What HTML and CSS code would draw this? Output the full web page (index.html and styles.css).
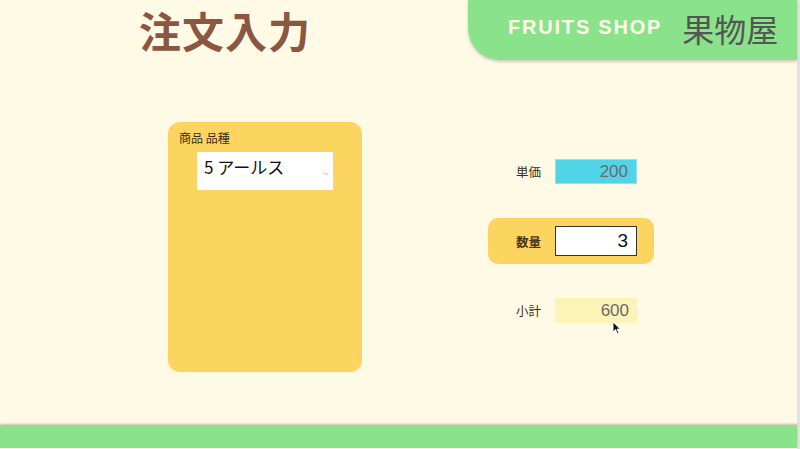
FILE: index.html
```html
<!DOCTYPE html>
<html lang="ja">
<head>
<meta charset="utf-8">
<title>注文入力</title>
<link rel="stylesheet" href="styles.css">
</head>
<body>
<div class="page">
  <header class="top">
    <h1 class="title">注文入力</h1>
    <div class="brand">
      <span class="brand-en">FRUITS SHOP</span>
      <span class="brand-ja">果物屋</span>
    </div>
  </header>
  <main class="content">
    <section class="card">
      <div class="card-label">商品 品種</div>
      <div class="select">
        <span class="select-text">5 アールス</span>
        <svg class="chev" width="6" height="4" viewBox="0 0 6 4"><path d="M0.5 0.5 L3 3 L5.5 0.5" fill="none" stroke="#bbb" stroke-width="0.8"/></svg>
      </div>
    </section>
    <section class="fields">
      <div class="row">
        <span class="label">単価</span>
        <div class="box box-blue">200</div>
      </div>
      <div class="row row-hl">
        <span class="label label-bold">数量</span>
        <div class="box box-input">3</div>
      </div>
      <div class="row">
        <span class="label">小計</span>
        <div class="box box-light">600</div>
      </div>
      <svg class="cursor" width="10" height="14" viewBox="0 0 10 14"><path d="M1 1 L1 11 L3.5 8.6 L5.3 12.6 L6.8 11.9 L5.1 8.1 L8.4 8.1 Z" fill="#111" stroke="#fff" stroke-width="0.9"/></svg>
    </section>
  </main>
  <footer class="footer"></footer>
</div>
</body>
</html>
```
FILE: styles.css
```css
* { box-sizing: border-box; }
html, body { margin: 0; padding: 0; }
body {
  width: 800px;
  height: 449px;
  background: #e4e2e6;
  overflow: hidden;
  font-family: "Noto Sans CJK JP", "Noto Sans", sans-serif;
}
.page {
  width: 797px;
  height: 449px;
  background: #fefae6;
  display: flex;
  flex-direction: column;
}
.top {
  display: flex;
  justify-content: space-between;
  height: 60px;
}
.title {
  margin: 0 0 0 139px;
  font-family: "Noto Sans CJK JP", sans-serif;
  font-weight: 700;
  font-size: 42px;
  line-height: 60px;
  color: #8b5741;
  letter-spacing: 1px;
}
.brand {
  width: 329px;
  height: 60px;
  background: #8ae28a;
  border-bottom-left-radius: 32px;
  box-shadow: 0 2px 3px rgba(0,0,0,0.18);
  display: flex;
  align-items: center;
  padding: 0 0 5px 40px;
}
.brand-en {
  font-family: "Liberation Sans", Arial, sans-serif;
  font-weight: 700;
  font-size: 20px;
  letter-spacing: 1.8px;
  color: #fffbe8;
}
.brand-ja {
  margin-left: 20px;
  font-family: "Noto Sans CJK JP", sans-serif;
  font-size: 32px;
  color: #555;
  line-height: 1;
}
.content {
  display: flex;
  padding-left: 168px;
  padding-top: 62px;
}
.card {
  width: 194px;
  height: 250px;
  background: #fbd55f;
  border-radius: 12px;
  padding: 8px 0 0 11px;
}
.card-label {
  font-size: 12px;
  line-height: 16px;
  color: #3b2a18;
}
.select {
  margin: 6px 0 0 18px;
  width: 136px;
  height: 38px;
  background: #fff;
  display: flex;
  align-items: center;
  justify-content: space-between;
  padding: 0 4px 0 7px;
}
.select-text {
  font-size: 17px;
  color: #111;
  line-height: 1;
  margin-top: -9px;
}
.chev { margin-top: 6px; }
.fields {
  position: relative;
  margin-left: 126px;
  width: 166px;
  padding-top: 37px;
  display: flex;
  flex-direction: column;
  gap: 34px;
}
.row {
  display: flex;
  align-items: center;
  padding-left: 28px;
  height: 25px;
}
.row-hl {
  height: 46px;
  background: #fbd55f;
  border-radius: 10px;
}
.label {
  width: 39px;
  font-size: 12.5px;
  color: #3b2a18;
}
.label-bold {
  font-weight: 700;
  font-size: 12.5px;
  color: #4a3514;
}
.box {
  width: 82px;
  height: 25px;
  font-family: "Liberation Sans", Arial, sans-serif;
  font-size: 17px;
  text-align: right;
  padding-right: 8px;
  line-height: 25px;
  color: #6a6a6a;
}
.box-blue {
  background: #52d4e8;
  border: 1px solid #8fe2ee;
  line-height: 23px;
}
.box-light { background: #fdf3b8; }
.box-input {
  height: 30px;
  background: #fff;
  border: 1px solid #333;
  color: #111;
  font-size: 19px;
  line-height: 27px;
}
.cursor {
  position: absolute;
  left: 124px;
  top: 199px;
}
.footer {
  margin-top: auto;
  margin-bottom: 1px;
  height: 23px;
  background: #8ae28a;
  box-shadow: 0 -1px 2px rgba(0,0,0,0.25);
}
```
